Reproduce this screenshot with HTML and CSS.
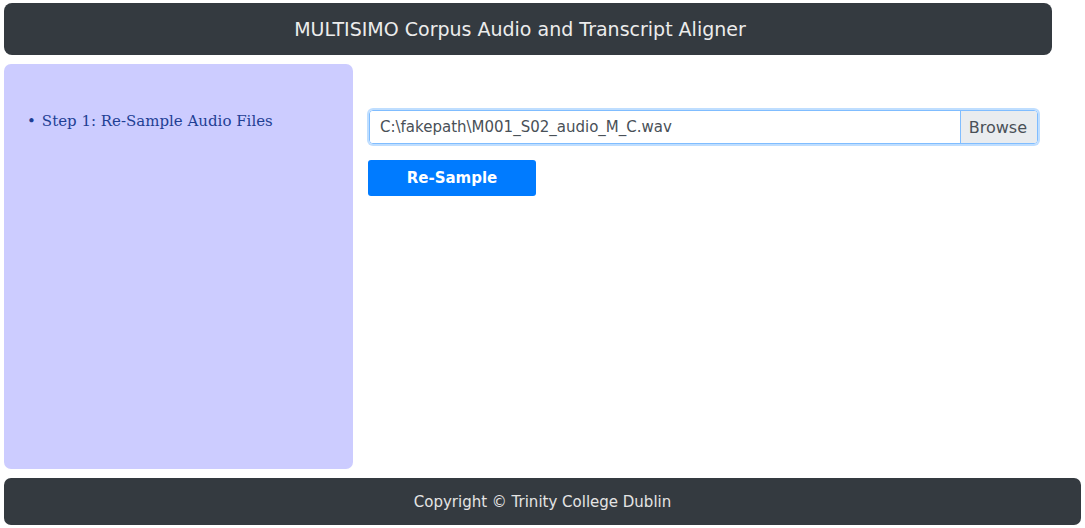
FILE: index.html
```html
<!DOCTYPE html>
<html>
<head>
<meta charset="utf-8">
<link rel="stylesheet" href="styles.css">
</head>
<body>
<div class="page">
  <header class="topbar">MULTISIMO Corpus Audio and Transcript Aligner</header>
  <div class="middle">
    <aside class="sidebar">
      <ul class="steps">
        <li>Step 1: Re-Sample Audio Files</li>
      </ul>
    </aside>
    <main class="content">
      <div class="file-input">
        <span class="file-name">C:\fakepath\M001_S02_audio_M_C.wav</span>
        <span class="browse">Browse</span>
      </div>
      <button class="btn-primary">Re-Sample</button>
    </main>
  </div>
  <footer class="footer">Copyright © Trinity College Dublin</footer>
</div>
</body>
</html>
```
FILE: styles.css
```css
html, body {
  margin: 0;
  padding: 0;
  background: #fff;
}
.page {
  padding: 3px 4px 0 4px;
  font-family: "DejaVu Sans", sans-serif;
  display: flex;
  flex-direction: column;
  height: 528px;
  box-sizing: border-box;
}
.topbar {
  background: #343a40;
  color: #ececec;
  height: 52px;
  border-radius: 8px;
  margin-right: 29px;
  display: flex;
  align-items: center;
  justify-content: center;
  font-size: 19px;
  padding-right: 16px;
}
.middle {
  display: flex;
  margin-top: 9px;
  height: 405px;
}
.sidebar {
  width: 349px;
  background: #ccccff;
  border-radius: 7px;
  flex: none;
}
.steps {
  margin: 0;
  padding: 48px 0 0 23px;
  list-style: none;
  font-family: "DejaVu Serif", serif;
  font-size: 15px;
  color: #1f3f94;
}
.steps li::before {
  content: "•";
  margin-right: 6px;
}
.content {
  flex: 1;
  padding: 46px 43px 0 14px;
}
.file-input {
  display: flex;
  height: 34px;
  border: 1px solid #80bdff;
  border-radius: 4px;
  box-shadow: 0 0 0 2px rgba(0, 123, 255, 0.25);
  margin-left: 2px;
  overflow: hidden;
  font-size: 15px;
  color: #495057;
  box-sizing: border-box;
}
.file-name {
  flex: 1;
  display: flex;
  align-items: center;
  padding-left: 10px;
  background: #fff;
}
.browse {
  display: flex;
  align-items: center;
  padding: 0 10px 0 8px;
  background: #e9ecef;
  border-left: 1px solid #80bdff;
  font-size: 16px;
}
.btn-primary {
  margin-top: 16px;
  margin-left: 1px;
  width: 168px;
  height: 36px;
  background: #007bff;
  border: none;
  border-radius: 3px;
  color: #fff;
  font-family: "DejaVu Sans", sans-serif;
  font-weight: bold;
  font-size: 15px;
  display: block;
}
.footer {
  margin-top: 9px;
  background: #343a40;
  color: #e4e4e4;
  height: 47px;
  border-radius: 7px;
  display: flex;
  align-items: center;
  justify-content: center;
  font-size: 15px;
}
```
